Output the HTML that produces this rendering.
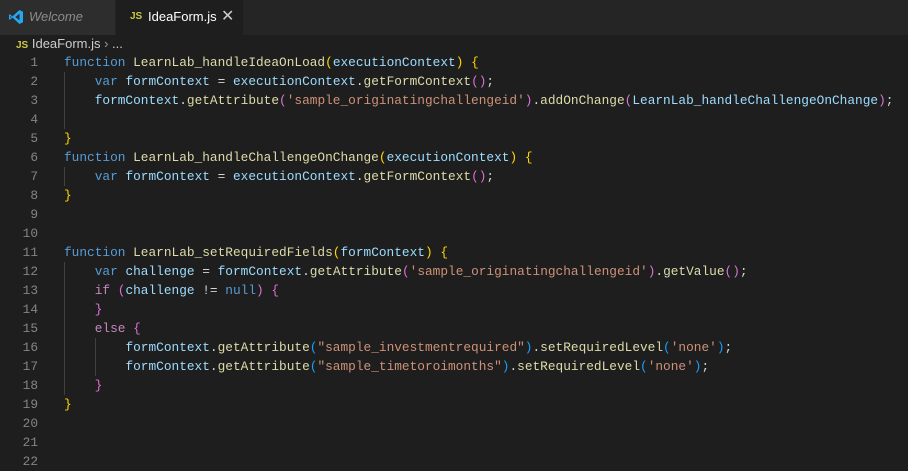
<!DOCTYPE html>
<html><head><style>
body{margin:0;width:908px;height:460px;background:#1e1e1e;overflow:hidden;font-family:"Liberation Sans",sans-serif;position:relative}
.tabs{position:absolute;left:0;top:0;width:908px;height:35px;background:#252526}
.tab{position:absolute;top:0;height:35px;line-height:33px;font-size:13px}
.t1{left:0;width:115px;background:#2d2d2d;color:#8b8b8b;font-style:italic;border-right:1px solid #252526}
.t2{left:116px;width:127px;background:#1e1e1e;color:#fff}
.js{color:#cbcb41;font-weight:bold;font-size:10px;font-family:"Liberation Sans",sans-serif}
.crumb{position:absolute;top:35px;left:16px;height:18px;line-height:18px;font-size:13px;color:#cccccc}
.code{position:absolute;top:53px;left:0;font-family:"Liberation Mono",monospace;font-size:12.8px;line-height:19px;white-space:pre}
.ln{position:absolute;left:0;width:38px;text-align:right;color:#858585}
.tx{position:absolute;left:64px;color:#d4d4d4}
.k{color:#569cd6}.c{color:#c586c0}.f{color:#dcdcaa}.v{color:#9cdcfe}.s{color:#ce9178}
.g{color:#ffd700}.p{color:#da70d6}.b{color:#179fff}
.guide{position:absolute;width:1px;background:#404040}
</style></head><body>
<div class="tabs">
<div class="tab t1"><svg style="position:absolute;left:8px;top:9px" width="16" height="16" viewBox="0 0 16 16"><path d="M11.5 1 L15 2.7 V13.3 L11.5 15 L4.5 8.6 L1.8 10.7 L1 10.2 V5.8 L1.8 5.3 L4.5 7.4 Z M11.5 4.6 L7.3 8 L11.5 11.4 Z M2.3 6.8 V9.2 L3.6 8 Z" fill="#23a9f2"/></svg><span style="position:absolute;left:29px">Welcome</span></div>
<div class="tab t2"><span class="js" style="position:absolute;left:14px">JS</span><span style="position:absolute;left:32px">IdeaForm.js</span><span style="position:absolute;left:105px;font-size:16px;color:#ccc;font-style:normal">✕</span></div>
</div>
<div class="crumb"><span class="js">JS</span> IdeaForm.js <span style="color:#999">›</span> ...</div>
<div class="guide" style="left:64px;top:72px;height:57px"></div>
<div class="guide" style="left:64px;top:167px;height:19px"></div>
<div class="guide" style="left:64px;top:262px;height:133px"></div>
<div class="guide" style="left:95px;top:338px;height:38px"></div>
<div class="code">
<div class="ln" style="top:0">1</div><div class="ln" style="top:19px">2</div><div class="ln" style="top:38px">3</div><div class="ln" style="top:57px">4</div><div class="ln" style="top:76px">5</div><div class="ln" style="top:95px">6</div><div class="ln" style="top:114px">7</div><div class="ln" style="top:133px">8</div><div class="ln" style="top:152px">9</div><div class="ln" style="top:171px">10</div><div class="ln" style="top:190px">11</div><div class="ln" style="top:209px">12</div><div class="ln" style="top:228px">13</div><div class="ln" style="top:247px">14</div><div class="ln" style="top:266px">15</div><div class="ln" style="top:285px">16</div><div class="ln" style="top:304px">17</div><div class="ln" style="top:323px">18</div><div class="ln" style="top:342px">19</div><div class="ln" style="top:361px">20</div><div class="ln" style="top:380px">21</div><div class="ln" style="top:399px">22</div>
<div class="tx" style="top:0"><span class="k">function</span> <span class="f">LearnLab_handleIdeaOnLoad</span><span class="g">(</span><span class="v">executionContext</span><span class="g">)</span> <span class="g">{</span></div>
<div class="tx" style="top:19px">    <span class="k">var</span> <span class="v">formContext</span> = <span class="v">executionContext</span>.<span class="f">getFormContext</span><span class="p">()</span>;</div>
<div class="tx" style="top:38px">    <span class="v">formContext</span>.<span class="f">getAttribute</span><span class="p">(</span><span class="s">'sample_originatingchallengeid'</span><span class="p">)</span>.<span class="f">addOnChange</span><span class="p">(</span><span class="v">LearnLab_handleChallengeOnChange</span><span class="p">)</span>;</div>
<div class="tx" style="top:76px"><span class="g">}</span></div>
<div class="tx" style="top:95px"><span class="k">function</span> <span class="f">LearnLab_handleChallengeOnChange</span><span class="g">(</span><span class="v">executionContext</span><span class="g">)</span> <span class="g">{</span></div>
<div class="tx" style="top:114px">    <span class="k">var</span> <span class="v">formContext</span> = <span class="v">executionContext</span>.<span class="f">getFormContext</span><span class="p">()</span>;</div>
<div class="tx" style="top:133px"><span class="g">}</span></div>
<div class="tx" style="top:190px"><span class="k">function</span> <span class="f">LearnLab_setRequiredFields</span><span class="g">(</span><span class="v">formContext</span><span class="g">)</span> <span class="g">{</span></div>
<div class="tx" style="top:209px">    <span class="k">var</span> <span class="v">challenge</span> = <span class="v">formContext</span>.<span class="f">getAttribute</span><span class="p">(</span><span class="s">'sample_originatingchallengeid'</span><span class="p">)</span>.<span class="f">getValue</span><span class="p">()</span>;</div>
<div class="tx" style="top:228px">    <span class="c">if</span> <span class="p">(</span><span class="v">challenge</span> != <span class="k">null</span><span class="p">)</span> <span class="p">{</span></div>
<div class="tx" style="top:247px">    <span class="p">}</span></div>
<div class="tx" style="top:266px">    <span class="c">else</span> <span class="p">{</span></div>
<div class="tx" style="top:285px">        <span class="v">formContext</span>.<span class="f">getAttribute</span><span class="b">(</span><span class="s">"sample_investmentrequired"</span><span class="b">)</span>.<span class="f">setRequiredLevel</span><span class="b">(</span><span class="s">'none'</span><span class="b">)</span>;</div>
<div class="tx" style="top:304px">        <span class="v">formContext</span>.<span class="f">getAttribute</span><span class="b">(</span><span class="s">"sample_timetoroimonths"</span><span class="b">)</span>.<span class="f">setRequiredLevel</span><span class="b">(</span><span class="s">'none'</span><span class="b">)</span>;</div>
<div class="tx" style="top:323px">    <span class="p">}</span></div>
<div class="tx" style="top:342px"><span class="g">}</span></div>
</div>
</body></html>
